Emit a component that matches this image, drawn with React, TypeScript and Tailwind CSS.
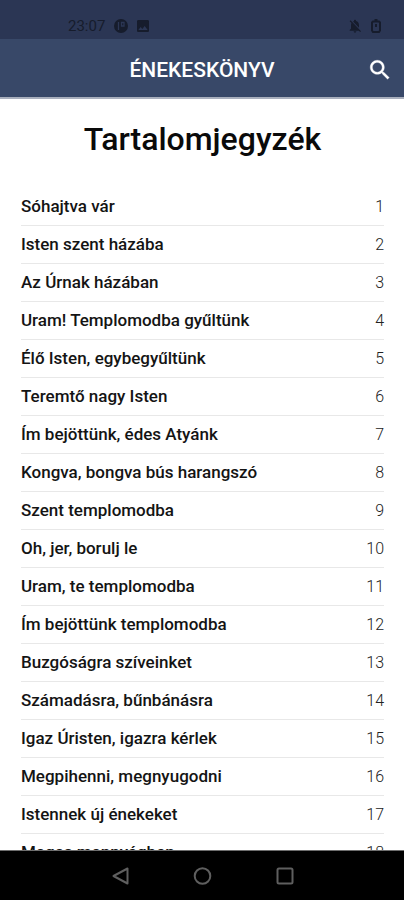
const songs = [
  "Sóhajtva vár",
  "Isten szent házába",
  "Az Úrnak házában",
  "Uram! Templomodba gyűltünk",
  "Élő Isten, egybegyűltünk",
  "Teremtő nagy Isten",
  "Ím bejöttünk, édes Atyánk",
  "Kongva, bongva bús harangszó",
  "Szent templomodba",
  "Oh, jer, borulj le",
  "Uram, te templomodba",
  "Ím bejöttünk templomodba",
  "Buzgóságra szíveinket",
  "Számadásra, bűnbánásra",
  "Igaz Úristen, igazra kérlek",
  "Megpihenni, megnyugodni",
  "Istennek új énekeket",
  "Magas mennyégben",
];

const StatusBar = () => {
  return (
    <div className="flex h-[39px] shrink-0 items-end bg-[#2b3654] pr-5 pb-[5px] pl-[68px] text-[#161c2c]">
      <span className="text-[15px] leading-4">23:07</span>
      <svg viewBox="0 0 16 16" className="ml-2 h-4 w-4" fill="currentColor">
        <circle cx="8" cy="8" r="7" />
        <path d="M5.500 4v8M8.500 4.500h2.500v3.500H8.500z" fill="none" stroke="#2b3654" strokeWidth="1.300" />
      </svg>
      <svg viewBox="0 0 24 24" className="ml-[6px] h-4 w-4" fill="currentColor">
        <path d="M21 19V5c0-1.100-.9-2-2-2H5c-1.100 0-2 .9-2 2v14c0 1.100.9 2 2 2h14c1.100 0 2-.9 2-2zM8.500 13.500l2.500 3.010L14.500 12l4.500 6H5l3.500-4.500z" />
      </svg>
      <svg viewBox="0 0 24 24" className="ml-auto h-4 w-4" fill="currentColor">
        <path d="M20 18.690L7.840 6.140 5.270 3.490 4 4.760l2.800 2.800v.010c-.52.990-.8 2.160-.8 3.420v5l-2 2v1h13.730l2 2L21 19.720l-1-1.030zM12 22c1.110 0 2-.890 2-2h-4c0 1.110.890 2 2 2zm6-7.320V11c0-3.080-1.640-5.640-4.500-6.320V4c0-.830-.670-1.500-1.500-1.500s-1.500.670-1.500 1.500v.680c-.150.030-.290.080-.420.120-.1.030-.2.070-.3.110h-.010c-.010 0-.010 0-.020.010-.230.090-.460.200-.680.310 0 0-.010 0-.010.010L18 14.680z" />
      </svg>
      <svg viewBox="0 0 16 16" className="ml-[5px] h-4 w-4" fill="none" stroke="currentColor" strokeWidth="2">
        <path d="M6.500 2h3M5 3.500h6l1 1v8l-1 1.500H5L4 12.500v-8z" />
        <path d="M8 6v3" />
      </svg>
    </div>
  );
};

const Header = () => {
  return (
    <header className="grid h-[60px] shrink-0 grid-cols-[48px_1fr_48px] items-center border-b-2 border-[#a9afbd] bg-[#384868] pt-[3px] text-white">
      <div className="col-start-2 text-center text-[21px] leading-6 font-medium">ÉNEKESKÖNYV</div>
      <button aria-label="Keresés" className="flex h-12 w-12 items-center justify-center">
        <svg
          viewBox="0 0 24 24"
          className="h-[26px] w-[26px]"
          fill="currentColor"
          stroke="currentColor"
          strokeWidth="0.3"
        >
          <path d="M15.500 14h-.790l-.280-.270C15.410 12.590 16 11.110 16 9.500 16 5.910 13.090 3 9.500 3S3 5.910 3 9.500 5.910 16 9.500 16c1.610 0 3.090-.590 4.230-1.570l.270.280v.790l5 4.990L20.490 19l-4.990-5zm-6 0C7.010 14 5 11.990 5 9.500S7.010 5 9.500 5 14 7.010 14 9.500 11.990 14 9.500 14z" />
        </svg>
      </button>
    </header>
  );
};

const NavBar = () => {
  return (
    <nav className="flex h-[50px] shrink-0 items-center justify-center gap-[58px] border-t border-[#6e6e6e] bg-black text-[#5f5f5f]">
      <button aria-label="Vissza">
        <svg viewBox="0 0 24 24" className="h-6 w-6" fill="none" stroke="currentColor" strokeWidth="2" strokeLinejoin="round">
          <path d="M19.500 4.500v15L5.500 12z" />
        </svg>
      </button>
      <button aria-label="Kezdőlap">
        <svg viewBox="0 0 24 24" className="h-6 w-6" fill="none" stroke="currentColor" strokeWidth="2">
          <circle cx="12.500" cy="12" r="7.800" />
        </svg>
      </button>
      <button aria-label="Áttekintés">
        <svg viewBox="0 0 24 24" className="h-6 w-6" fill="none" stroke="currentColor" strokeWidth="2">
          <rect x="5.500" y="4.500" width="15" height="15" rx="1.500" />
        </svg>
      </button>
    </nav>
  );
};

const App = () => {
  return (
    <div className="flex h-screen flex-col bg-white font-['Roboto',sans-serif]">
      <StatusBar />
      <Header />
      <main className="min-h-0 flex-1 overflow-hidden pr-5 pl-[21px]">
        <h1 className="pt-5 pb-[29px] text-center text-[32px] leading-10 font-medium text-[#0a0a0a]">
          Tartalomjegyzék
        </h1>
        <ol>
          {songs.map((title, index) => (
            <li key={title} className="h-[38px] border-b border-[#e8e8e8]">
              <a href={`#${index + 1}`} className="flex h-full items-center justify-between">
                <span className="text-[17px] font-medium text-[#141414]">{title}</span>
                <span className="text-base font-light text-[#222222]">{index + 1}</span>
              </a>
            </li>
          ))}
        </ol>
      </main>
      <NavBar />
    </div>
  );
};

export default App;
